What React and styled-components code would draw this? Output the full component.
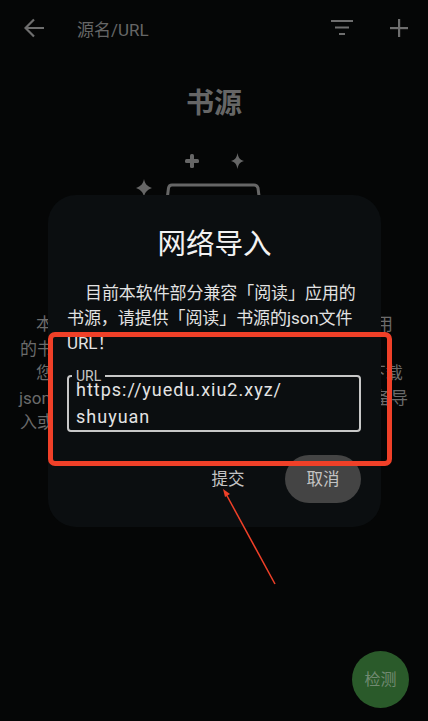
import React from 'react';
import styled, { createGlobalStyle } from 'styled-components';

const GlobalStyle = createGlobalStyle`
  html, body {
    margin: 0;
    padding: 0;
    background: #050606;
  }
  * {
    box-sizing: border-box;
  }
`;

const fontStack = `Roboto, "Noto Sans CJK SC", sans-serif`;

const Page = styled.div`
  position: relative;
  width: 428px;
  height: 721px;
  overflow: hidden;
  background: #050606;
  color: #6b6b6b;
  font-family: ${fontStack};
`;

const Toolbar = styled.header`
  display: flex;
  align-items: center;
  height: 56px;
  padding: 0 20px 0 24px;
`;

const BackIcon = styled.svg`
  width: 20px;
  height: 20px;
  margin-right: 33px;
`;

const SearchHint = styled.div`
  flex: 1;
  font-size: 17px;
  color: #666;
`;

const ActionIcon = styled.svg`
  width: ${({ $size }) => $size}px;
  height: ${({ $size }) => $size}px;
  margin-left: ${({ $gap }) => $gap}px;
`;

const Heading = styled.h1`
  margin: 29px 0 0;
  text-align: center;
  font-size: 28px;
  line-height: 38px;
  font-weight: 700;
  color: #666;
`;

const Illustration = styled.svg`
  display: block;
  width: 428px;
  height: 160px;
  margin-top: 29px;
`;

const IntroLine = styled.div`
  padding-left: ${({ $left }) => $left}px;
  font-size: 17px;
  line-height: 24.5px;
  white-space: nowrap;
  color: #6b6b6b;
`;

const Dialog = styled.section`
  position: absolute;
  left: 48px;
  top: 195px;
  width: 333px;
  height: 332px;
  padding: 30px 19px 0;
  border-radius: 28px;
  background: #0b0e10;
`;

const DialogTitle = styled.h2`
  margin: 0;
  text-align: center;
  font-size: 28.5px;
  line-height: 40px;
  font-weight: 400;
  color: #f2f2f2;
`;

const DialogText = styled.p`
  margin: 16px 0 0;
  text-indent: 18px;
  font-size: 17px;
  line-height: 25px;
  letter-spacing: -0.08px;
  color: #e2e2e2;
`;

const Field = styled.div`
  position: relative;
  width: 294px;
  height: 57px;
  margin: 19px 0 0;
  border: 2px solid #c8c8c8;
  border-radius: 4px;
`;

const FieldLabel = styled.span`
  position: absolute;
  left: 3px;
  top: -8px;
  padding: 0 4px;
  font-size: 14px;
  line-height: 14px;
  color: #c8c8c8;
  background: #0b0e10;
`;

const FieldValue = styled.div`
  position: absolute;
  left: 7px;
  top: -1px;
  width: 270px;
  font-size: 18px;
  line-height: 27px;
  letter-spacing: 1px;
  color: #e4e4e4;
  word-break: break-word;
`;

const DialogActions = styled.div`
  display: flex;
  align-items: center;
  justify-content: flex-end;
  margin: 23px 1px 0 0;
`;

const TextButton = styled.button`
  border: none;
  padding: 0 0 3px;
  height: 48px;
  font-family: inherit;
  font-size: 16.5px;
  color: #c4c4c4;
  background: ${({ $filled }) => ($filled ? '#444' : 'transparent')};
  width: ${({ $filled }) => ($filled ? '76px' : '34px')};
  margin-left: ${({ $filled }) => ($filled ? '40px' : '0')};
  border-radius: 24px;
`;

const Fab = styled.button`
  position: absolute;
  left: 352px;
  top: 651px;
  width: 57px;
  height: 57px;
  border: none;
  padding: 0 0 3px;
  border-radius: 50%;
  font-family: inherit;
  font-size: 16px;
  color: #728a72;
  background: #2a5a2a;
`;

const RedFrame = styled.div`
  position: absolute;
  left: 48px;
  top: 332px;
  width: 344px;
  height: 134px;
  border: 5px solid #f04028;
  border-radius: 7px;
  pointer-events: none;
`;

const ArrowMark = styled.svg`
  position: absolute;
  left: 215px;
  top: 480px;
  width: 70px;
  height: 110px;
  pointer-events: none;
`;

export default function App() {
  return (
    <Page>
      <GlobalStyle />
      <Toolbar>
        <BackIcon viewBox="0 0 20 20" fill="none" stroke="#6e6e6e" strokeWidth="2.2">
          <path d="M20 10H1.5M10 1.5L1.5 10L10 18.5" />
        </BackIcon>
        <SearchHint>源名/URL</SearchHint>
        <ActionIcon $size={22} viewBox="0 0 22 16" fill="#6e6e6e">
          <rect x="0" y="0" width="22" height="2" />
          <rect x="4" y="6.5" width="14" height="2" />
          <rect x="8" y="13" width="6" height="2" />
        </ActionIcon>
        <ActionIcon $size={18} $gap={37} viewBox="0 0 18 18" fill="#6e6e6e">
          <rect x="0" y="8" width="18" height="2.2" />
          <rect x="8" y="0" width="2.2" height="18" />
        </ActionIcon>
      </Toolbar>
      <Heading>书源</Heading>
      <Illustration viewBox="0 0 428 160" fill="#666">
        <rect x="185" y="7" width="14" height="4" rx="1.5" />
        <rect x="190" y="2" width="4" height="14" rx="1.5" />
        <path d="M237.5 1C238.5 6 240 8 244 9C240 10 238.5 12 237.5 17C236.5 12 235 10 231 9C235 8 236.5 6 237.5 1Z" />
        <path d="M144 27C145 32 147 34 152 36C147 38 145 40 144 45C143 40 141 38 136 36C141 34 143 32 144 27Z" />
        <path d="M165.5 60L168.5 36Q169 33 172 33H254Q257 33 258 36L261 60" fill="none" stroke="#666" strokeWidth="3" />
      </Illustration>
      <div>
        <IntroLine $left={36}>本软件不提供任何内容，需要导入书源才能使用</IntroLine>
        <IntroLine $left={20}>的书源，目前兼容「阅读」应用的书源格式。</IntroLine>
        <IntroLine $left={36}>您可以点击右上角的+号，选择从网络导入或下载</IntroLine>
        <IntroLine $left={19}>json格式的书源文件，也可以将其分享到其他设备导</IntroLine>
        <IntroLine $left={20}>入或者导出使用。</IntroLine>
      </div>
      <Dialog>
        <DialogTitle>网络导入</DialogTitle>
        <DialogText>目前本软件部分兼容「阅读」应用的书源，请提供「阅读」书源的json文件URL！</DialogText>
        <Field>
          <FieldLabel>URL</FieldLabel>
          <FieldValue>https://yuedu.xiu2.xyz/<br />shuyuan</FieldValue>
        </Field>
        <DialogActions>
          <TextButton>提交</TextButton>
          <TextButton $filled>取消</TextButton>
        </DialogActions>
      </Dialog>
      <Fab>检测</Fab>
      <RedFrame />
      <ArrowMark viewBox="0 0 70 110" fill="#f04028">
        <path d="M60 104L11 14" stroke="#f04028" strokeWidth="1.5" />
        <path d="M8 9L15 14L10 17Z" />
      </ArrowMark>
    </Page>
  );
}
